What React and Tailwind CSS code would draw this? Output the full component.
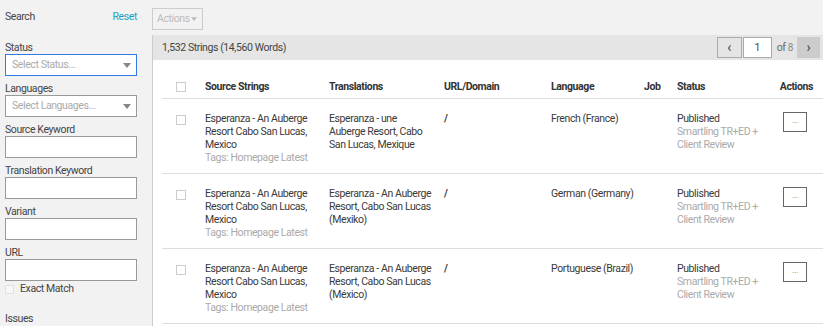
import React from "react";

const rows = [
  {
    source: ["Esperanza - An Auberge", "Resort Cabo San Lucas,", "Mexico"],
    translation: ["Esperanza - une", "Auberge Resort, Cabo", "San Lucas, Mexique"],
    language: "French (France)",
  },
  {
    source: ["Esperanza - An Auberge", "Resort Cabo San Lucas,", "Mexico"],
    translation: ["Esperanza - An Auberge", "Resort, Cabo San Lucas", "(Mexiko)"],
    language: "German (Germany)",
  },
  {
    source: ["Esperanza - An Auberge", "Resort Cabo San Lucas,", "Mexico"],
    translation: ["Esperanza - An Auberge", "Resort, Cabo San Lucas", "(México)"],
    language: "Portuguese (Brazil)",
  },
];

const Caret = () => (
  <svg width="8" height="5" viewBox="0 0 8 5" className="fill-[#888]">
    <path d="M0 0h8L4 5z" />
  </svg>
);

const Field = ({ label, children }) => (
  <div className="mb-[6px]">
    <div className="h-[13px] leading-[13px] text-[#444]">{label}</div>
    {children}
  </div>
);

const TextInput = () => (
  <div className="h-[22px] w-[132px] bg-white border border-[#999]" />
);

const Select = ({ placeholder, active }) => (
  <div
    className={`h-[22px] w-[132px] bg-white flex items-center justify-between pl-[6px] pr-[5px] ${
      active ? "border border-[#2d7be5]" : "border border-[#999]"
    }`}
  >
    <span className="text-[#aaa]">{placeholder}</span>
    <Caret />
  </div>
);

const Checkbox = () => (
  <div className="w-[10px] h-[10px] border border-[#ccc] bg-white" />
);

const cols = "grid grid-cols-[43px_124px_115px_107px_93px_33px_94px_1fr]";

export default function App() {
  return (
    <div
      className="flex w-full h-[326px] overflow-hidden bg-[#f2f2f2] text-[#333] text-[10.5px] tracking-[-0.4px]"
      style={{ fontFamily: "Roboto, 'Liberation Sans', sans-serif" }}
    >
      {/* sidebar */}
      <aside className="w-[152px] shrink-0 pl-[5px] pr-[15px] pt-[10px]">
        <div className="flex justify-between items-center h-[14px] mb-[17px]">
          <span className="text-[#444]">Search</span>
          <span className="text-[#1aa3c4]">Reset</span>
        </div>
        <Field label="Status">
          <Select placeholder="Select Status..." active />
        </Field>
        <Field label="Languages">
          <Select placeholder="Select Languages..." />
        </Field>
        <Field label="Source Keyword">
          <TextInput />
        </Field>
        <Field label="Translation Keyword">
          <TextInput />
        </Field>
        <Field label="Variant">
          <TextInput />
        </Field>
        <Field label="URL">
          <TextInput />
        </Field>
        <div className="flex items-center gap-[6px] -mt-[5px] h-[14px]">
          <div className="w-[9px] h-[9px] border border-[#e2e2e2] bg-[#f7f7f7]" />
          <span className="text-[#444]">Exact Match</span>
        </div>
        <div className="mt-[16px] h-[13px] leading-[13px] text-[#444]">Issues</div>
        <div className="mt-[3px] h-[22px] w-[132px] bg-white border border-[#999]" />
      </aside>

      {/* main */}
      <main className="flex-1 flex flex-col min-w-0">
        <div className="h-[35px] pt-[8px]">
          <div className="w-[51px] h-[22px] border border-[#ccc] flex items-center justify-between pl-[4px] pr-[5px]">
            <span className="text-[#bbb]">Actions</span>
            <svg width="6" height="4" viewBox="0 0 8 5" className="fill-[#bbb]">
              <path d="M0 0h8L4 5z" />
            </svg>
          </div>
        </div>

        <section className="flex-1 bg-white border-l border-[#ccc]">
          <div className="h-[25px] bg-[#e5e5e5] flex items-center justify-between pl-[9px] pr-[3px]">
            <span className="text-[#444]">1,532 Strings (14,560 Words)</span>
            <div className="flex items-center">
              <div className="w-[25px] h-[21px] border border-[#aaa] flex items-center justify-center text-[14px] text-[#444]">
                ‹
              </div>
              <div className="w-[29px] h-[21px] border border-[#aaa] bg-white flex items-center justify-center text-[#444] ml-[1px]">
                1
              </div>
              <span className="text-[#666] ml-[5px]">
                of <span className="text-[10px] text-[#888]">8</span>
              </span>
              <div className="w-[23px] h-[21px] bg-[#ccc] flex items-center justify-center text-[14px] text-[#444] ml-[4px]">
                ›
              </div>
            </div>
          </div>

          <div className="ml-[9px] mt-[15px]">
            <div className={`${cols} h-[24px] items-center border-b border-[#ddd] font-bold text-[#333]`}>
              <div className="pl-[14px]">
                <Checkbox />
              </div>
              <div>Source Strings</div>
              <div>Translations</div>
              <div>URL/Domain</div>
              <div>Language</div>
              <div>Job</div>
              <div>Status</div>
              <div className="text-right pr-[10px]">Actions</div>
            </div>

            {rows.map((r, i) => (
              <div
                key={i}
                className={`${cols} h-[75px] border-b border-[#ddd] leading-[13px] pt-[13px] text-[#3a3a3a]`}
              >
                <div className="pl-[14px] pt-[3px]">
                  <Checkbox />
                </div>
                <div>
                  {r.source.map((l) => (
                    <div key={l}>{l}</div>
                  ))}
                  <div className="text-[#aaa]">Tags: Homepage Latest</div>
                </div>
                <div>
                  {r.translation.map((l) => (
                    <div key={l}>{l}</div>
                  ))}
                </div>
                <div className="font-bold">/</div>
                <div>{r.language}</div>
                <div />
                <div>
                  <div>Published</div>
                  <div className="text-[#aaa]">Smartling TR+ED +</div>
                  <div className="text-[#aaa]">Client Review</div>
                </div>
                <div className="pl-[12px]">
                  <div className="w-[24px] h-[20px] border border-[#666] flex items-center justify-center text-[9px] leading-none text-[#888] pb-[3px]">
                    ...
                  </div>
                </div>
              </div>
            ))}
          </div>
        </section>
      </main>
    </div>
  );
}
